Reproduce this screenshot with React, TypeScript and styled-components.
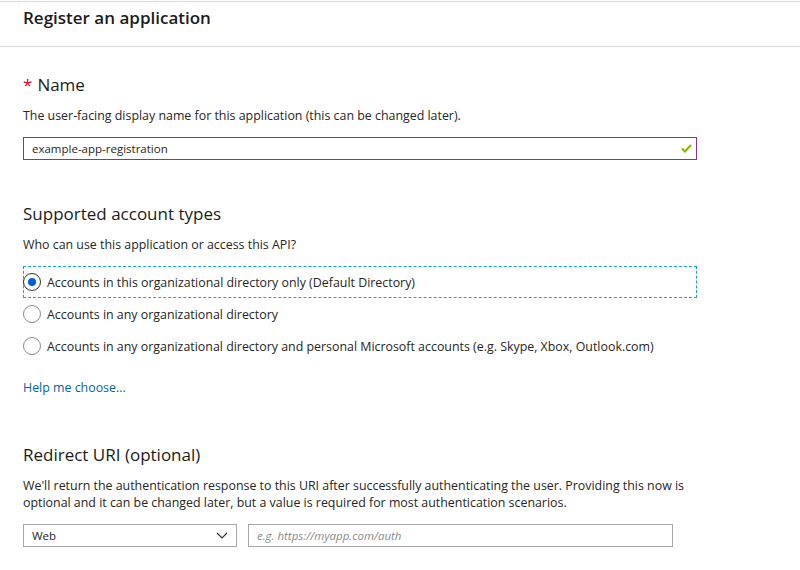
import React from 'react'
import styled, { createGlobalStyle } from 'styled-components'

const GlobalStyle = createGlobalStyle`
  html, body {
    margin: 0;
    padding: 0;
    background: #fff;
  }
  body {
    font-family: 'Open Sans', 'Noto Sans', sans-serif;
    color: #262626;
  }
`

const Page = styled.div`
  width: 800px;
  height: 570px;
  overflow: hidden;
  border-top: 1px solid #d9d9d9;
  margin-top: 1px;
`

const Header = styled.div`
  height: 44px;
  padding-left: 23px;
  border-bottom: 1px solid #d9d9d9;
  display: flex;
  align-items: flex-start;
`

const Title = styled.h1`
  margin: 4px 0 0;
  font-size: 17px;
  font-weight: 600;
  color: #1b1b1b;
`

const Body = styled.div`
  padding: 26px 0 0 23px;
  width: 674px;
`

const Section = styled.section<{ gap?: number }>`
  margin-bottom: ${({ gap }) => gap ?? 0}px;
`

const Heading = styled.h2`
  margin: 0;
  font-size: 17px;
  font-weight: 400;
  line-height: 24px;
  color: #1b1b1b;
`

const Required = styled.span`
  color: #e00b1c;
  margin-right: 5px;
`

const Help = styled.p`
  margin: 10px 0 0;
  font-size: 12.4px;
  line-height: 17px;
  color: #262626;
`

const TextField = styled.div<{ valid?: boolean }>`
  margin-top: 13px;
  height: 23px;
  box-sizing: border-box;
  border: 1px solid ${({ valid }) => (valid ? '#8b2fa6' : '#a6a6a6')};
  display: flex;
  align-items: center;
  padding: 0 4px 0 8px;
  font-size: 11.5px;
`

const FieldText = styled.span<{ placeholder?: boolean }>`
  flex: 1;
  font-style: ${({ placeholder }) => (placeholder ? 'italic' : 'normal')};
  color: ${({ placeholder }) => (placeholder ? '#8a8a8a' : '#262626')};
`

const RadioGroup = styled.div`
  margin-top: 13px;
  display: flex;
  flex-direction: column;
`

const RadioRow = styled.label<{ focused?: boolean }>`
  height: 32px;
  box-sizing: border-box;
  display: flex;
  align-items: center;
  gap: 6px;
  font-size: 12.4px;
  color: #262626;
  border: 1px dashed ${({ focused }) => (focused ? '#0fa5e0' : 'transparent')};
`

const RadioCircle = styled.span<{ checked?: boolean }>`
  width: 18px;
  height: 18px;
  box-sizing: border-box;
  border-radius: 50%;
  border: 1px solid ${({ checked }) => (checked ? '#333' : '#8a8a8a')};
  display: flex;
  align-items: center;
  justify-content: center;
  margin-left: -1px;
  &::after {
    content: '';
    width: 8px;
    height: 8px;
    border-radius: 50%;
    background: ${({ checked }) => (checked ? '#0063d1' : 'transparent')};
  }
`

const Link = styled.a`
  display: inline-block;
  margin-top: 17px;
  font-size: 12.4px;
  color: #0063b1;
  text-decoration: none;
`

const Row = styled.div`
  margin-top: 13px;
  display: flex;
  gap: 11px;
`

const Select = styled.div`
  width: 214px;
  height: 23px;
  box-sizing: border-box;
  border: 1px solid #a6a6a6;
  display: flex;
  align-items: center;
  padding: 0 8px;
  font-size: 11.5px;
  justify-content: space-between;
`

const UrlField = styled(TextField)`
  margin-top: 0;
  width: 425px;
`

const Check = () => (
  <svg width="11" height="9" viewBox="0 0 11 9">
    <path d="M1 4.5 L4 7.5 L10 1" fill="none" stroke="#7fba00" strokeWidth="2" />
  </svg>
)

const Chevron = () => (
  <svg width="12" height="7" viewBox="0 0 12 7">
    <path d="M1 1 L6 6 L11 1" fill="none" stroke="#333" strokeWidth="1.2" />
  </svg>
)

const options = [
  'Accounts in this organizational directory only (Default Directory)',
  'Accounts in any organizational directory',
  'Accounts in any organizational directory and personal Microsoft accounts (e.g. Skype, Xbox, Outlook.com)',
]

export default function App() {
  return (
    <Page>
      <GlobalStyle />
      <Header>
        <Title>Register an application</Title>
      </Header>
      <Body>
        <Section gap={42}>
          <Heading>
            <Required>*</Required>Name
          </Heading>
          <Help>The user-facing display name for this application (this can be changed later).</Help>
          <TextField valid>
            <FieldText>example-app-registration</FieldText>
            <Check />
          </TextField>
        </Section>
        <Section gap={46}>
          <Heading>Supported account types</Heading>
          <Help>Who can use this application or access this API?</Help>
          <RadioGroup>
            {options.map((o, i) => (
              <RadioRow key={o} focused={i === 0}>
                <RadioCircle checked={i === 0} />
                {o}
              </RadioRow>
            ))}
          </RadioGroup>
          <Link href="#">Help me choose...</Link>
        </Section>
        <Section>
          <Heading>Redirect URI (optional)</Heading>
          <Help>
            We'll return the authentication response to this URI after successfully authenticating the user. Providing this now is
            optional and it can be changed later, but a value is required for most authentication scenarios.
          </Help>
          <Row>
            <Select>
              <span>Web</span>
              <Chevron />
            </Select>
            <UrlField>
              <FieldText placeholder>e.g. https://myapp.com/auth</FieldText>
            </UrlField>
          </Row>
        </Section>
      </Body>
    </Page>
  )
}
